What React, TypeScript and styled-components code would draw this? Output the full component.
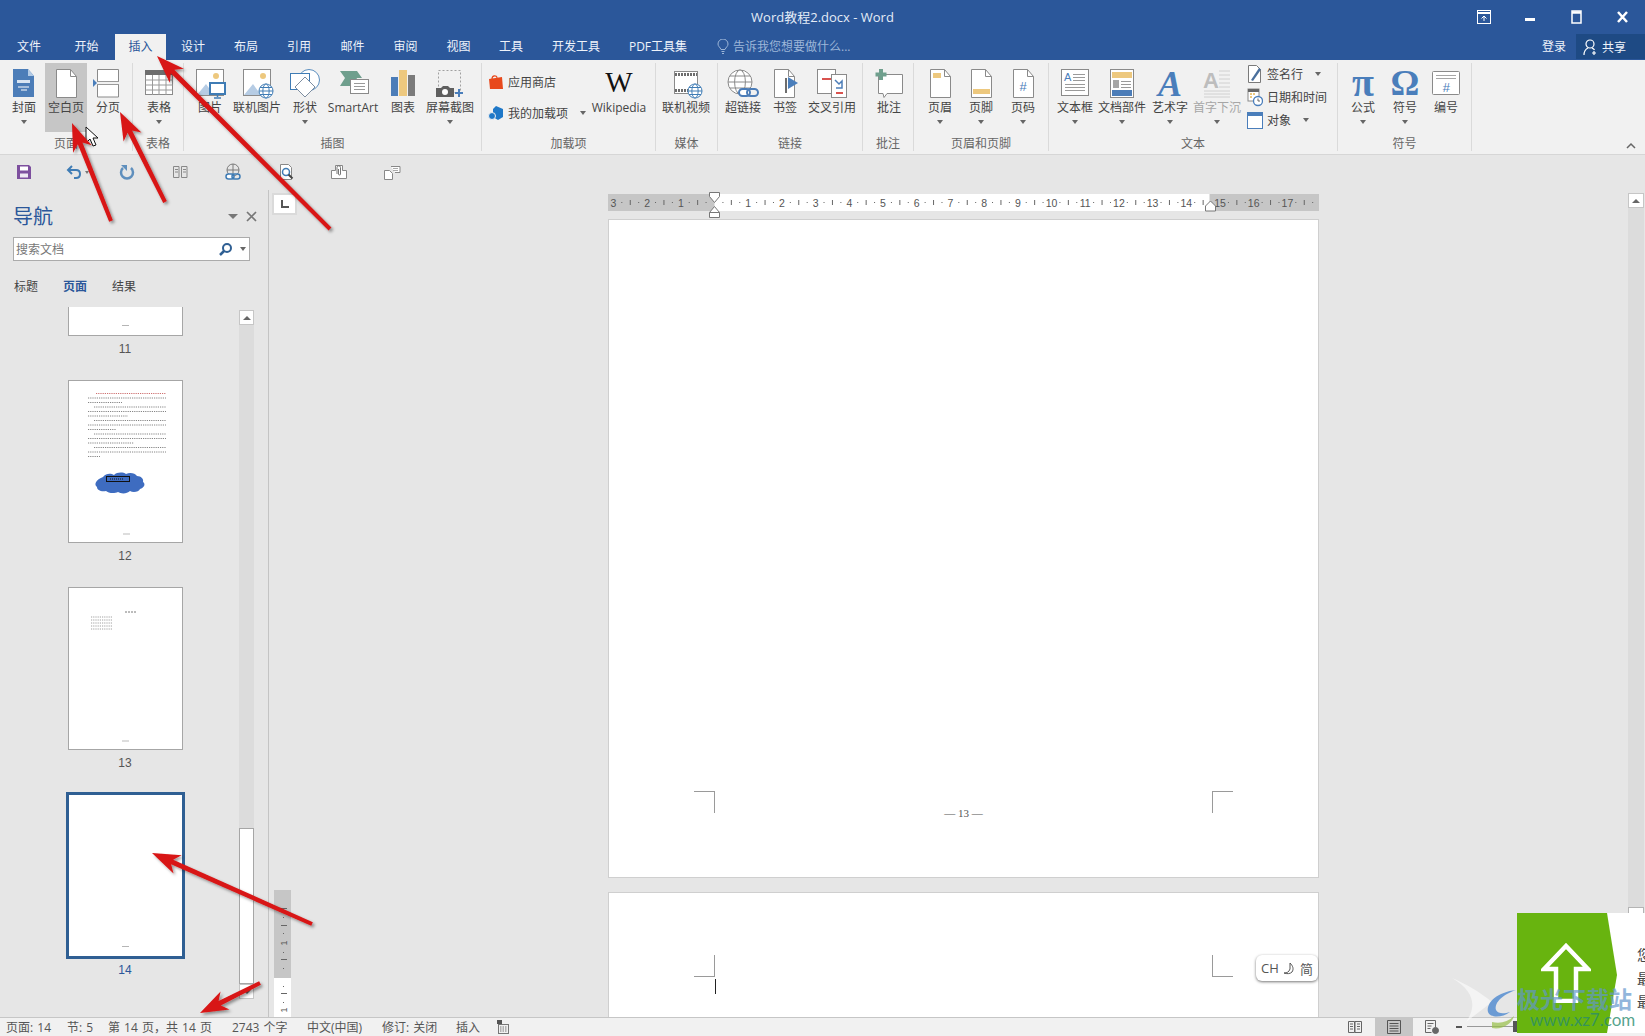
import { type ReactNode } from "react";
import styled, { createGlobalStyle } from "styled-components";

const BLUE = "#2b579a";
const ICON_BLUE = "#4a7ebb";
const GOLD = "#edc87e";
const UI_FONT = `"Open Sans", "Noto Sans CJK SC", sans-serif`;

const GlobalStyle = createGlobalStyle`
  * { box-sizing: border-box; }
  html, body { margin: 0; padding: 0; }
  body { font-family: ${UI_FONT}; font-size: 12px; color: #444; overflow: hidden; }
`;

const Shell = styled.div`
  position: relative;
  width: 1645px;
  height: 1036px;
  overflow: hidden;
  display: flex;
  flex-direction: column;
  background: #e6e6e6;
`;

const TitleBar = styled.header`
  height: 34px;
  background: ${BLUE};
  display: grid;
  grid-template-columns: 1fr auto 1fr;
  align-items: center;
`;

const DocTitle = styled.div`
  grid-column: 2;
  padding-bottom: 2px;
  color: #e4ecf7;
  font-size: 13px;
`;

const WindowButtons = styled.div`
  grid-column: 3;
  justify-self: end;
  display: flex;
`;

const WindowButton = styled.div`
  width: 46px;
  height: 34px;
  display: flex;
  align-items: center;
  justify-content: center;
`;

const TabBar = styled.nav`
  height: 26px;
  background: ${BLUE};
  display: flex;
  align-items: stretch;
`;

const Tab = styled.div<{ $w: number; $active?: boolean }>`
  width: ${(p) => p.$w}px;
  padding-bottom: 2px;
  display: flex;
  align-items: center;
  justify-content: center;
  white-space: nowrap;
  color: ${(p) => (p.$active ? BLUE : "#eef3fa")};
  background: ${(p) => (p.$active ? "#f1f1f1" : "transparent")};
`;

const TellMe = styled.div`
  margin-left: 16px;
  padding-bottom: 2px;
  display: flex;
  align-items: center;
  gap: 4px;
  color: #9db6d8;
`;

const SignIn = styled.div`
  margin-left: auto;
  margin-right: 10px;
  padding-bottom: 2px;
  align-self: center;
  color: #eef3fa;
`;

const ShareButton = styled.div`
  width: 69px;
  height: 25px;
  background: #1e4a84;
  color: #eef3fa;
  display: flex;
  align-items: center;
  gap: 3px;
  padding-left: 7px;
`;

const Ribbon = styled.section`
  position: relative;
  height: 95px;
  padding-top: 3px;
  background: #f1f1f1;
  border-bottom: 1px solid #d6d6d6;
  display: flex;
  align-items: flex-start;
`;

const Group = styled.div<{ $w: number }>`
  width: ${(p) => p.$w}px;
  height: 88px;
  border-right: 1px solid #dadada;
  display: flex;
  flex-direction: column;
`;

const GroupBody = styled.div<{ $pad: number }>`
  height: 69px;
  padding-left: ${(p) => p.$pad}px;
  display: flex;
`;

const GroupLabel = styled.div`
  margin-top: 4px;
  line-height: 16px;
  text-align: center;
  color: #666;
`;

const BigButton = styled.div<{ $w: number; $active?: boolean; $disabled?: boolean }>`
  width: ${(p) => p.$w}px;
  height: 69px;
  padding-top: 3px;
  flex-shrink: 0;
  display: flex;
  flex-direction: column;
  align-items: center;
  white-space: nowrap;
  line-height: 16px;
  color: ${(p) => (p.$disabled ? "#a6a6a6" : "#444")};
  background: ${(p) => (p.$active ? "#c6c6c6" : "transparent")};
`;

const IconSvg = styled.svg`
  overflow: visible;
  flex-shrink: 0;
`;

const Caret = styled.i<{ $inline?: boolean }>`
  display: block;
  width: 0;
  height: 0;
  margin-top: ${(p) => (p.$inline ? 0 : 4)}px;
  margin-left: ${(p) => (p.$inline ? 8 : 0)}px;
  border-left: 3px solid transparent;
  border-right: 3px solid transparent;
  border-top: 4px solid #666;
`;

const SmallColumn = styled.div<{ $w: number; $top: number; $gap: number; $left?: number }>`
  width: ${(p) => p.$w}px;
  padding-top: ${(p) => p.$top}px;
  padding-left: ${(p) => p.$left ?? 0}px;
  display: flex;
  flex-direction: column;
  gap: ${(p) => p.$gap}px;
`;

const SmallRow = styled.div`
  height: 22px;
  display: flex;
  align-items: center;
  gap: 4px;
  white-space: nowrap;
`;

const CollapseMark = styled.svg`
  position: absolute;
  right: 9px;
  bottom: 5px;
`;

const QuickBar = styled.div`
  height: 35px;
  padding: 0 0 2px 12px;
  display: flex;
  align-items: center;
  gap: 35px;
`;

const SaveSlot = styled.div`
  margin: 0 -3px 0 3px;
  display: flex;
`;

const QuickIcon = styled.div`
  position: relative;
  width: 18px;
  height: 18px;
`;

const UndoCaret = styled.i`
  position: absolute;
  left: 20px;
  top: 8px;
  border-left: 2px solid transparent;
  border-right: 2px solid transparent;
  border-top: 3px solid #777;
`;

const Workspace = styled.div`
  flex: 1;
  min-height: 0;
  display: flex;
`;

const NavPane = styled.aside`
  width: 269px;
  flex-shrink: 0;
  border-right: 1px solid #c4c4c4;
  display: flex;
  flex-direction: column;
`;

const NavHeader = styled.div`
  margin-top: 13px;
  height: 28px;
  padding: 0 8px 0 13px;
  display: flex;
  align-items: center;
`;

const NavTitle = styled.h2`
  margin: 0;
  flex: 1;
  font-size: 20px;
  font-weight: 400;
  line-height: 28px;
  color: ${BLUE};
`;

const SearchBox = styled.div`
  margin: 6px 0 0 13px;
  width: 237px;
  height: 24px;
  background: #fff;
  border: 1px solid #ababab;
  padding: 0 3px 0 2px;
  display: flex;
  align-items: center;
  color: #777;
`;

const SearchHint = styled.span`
  flex: 1;
`;

const SearchCaret = styled(Caret)`
  margin-left: 7px;
`;

const NavTabs = styled.div`
  margin: 17px 0 11px 14px;
  height: 18px;
  display: flex;
  gap: 25px;
  line-height: 18px;
`;

const NavTab = styled.span<{ $active?: boolean }>`
  color: ${(p) => (p.$active ? BLUE : "#444")};
  font-weight: ${(p) => (p.$active ? 700 : 400)};
`;

const ThumbArea = styled.div`
  flex: 1;
  min-height: 0;
  display: flex;
`;

const ThumbList = styled.div`
  width: 239px;
  padding-left: 11px;
  overflow: hidden;
  display: flex;
  flex-direction: column;
  align-items: center;
`;

const Thumb = styled.div<{ $h: number; $selected?: boolean }>`
  width: ${(p) => (p.$selected ? 119 : 115)}px;
  height: ${(p) => p.$h}px;
  margin-top: ${(p) => (p.$selected ? -2 : 0)}px;
  flex-shrink: 0;
  background: #fff;
  border: ${(p) => (p.$selected ? `3px solid #2f5f93` : "1px solid #a6a6a6")};
  border-top-width: ${(p) => (p.$h < 40 ? 0 : p.$selected ? 3 : 1)}px;
  display: flex;
  flex-direction: column;
  align-items: center;
  justify-content: flex-end;
`;

const ThumbNumber = styled.div<{ $selected?: boolean }>`
  flex-shrink: 0;
  margin-top: ${(p) => (p.$selected ? 3 : 5)}px;
  margin-bottom: 23px;
  line-height: 16px;
  font-family: "Liberation Sans", sans-serif;
  color: ${(p) => (p.$selected ? BLUE : "#555")};
`;

const ThumbPageMark = styled.div`
  width: 7px;
  height: 1px;
  margin-bottom: 9px;
  background: #b5b5b5;
`;

const NavScroll = styled.div`
  width: 15px;
  height: 689px;
  margin-top: 3px;
  background: #dcdcdc;
  display: flex;
  flex-direction: column;
`;

const ScrollButton = styled.div`
  height: 15px;
  flex-shrink: 0;
  background: #fff;
  border: 1px solid #c6c6c6;
  display: flex;
  align-items: center;
  justify-content: center;
`;

const NavScrollThumb = styled.div`
  height: 156px;
  margin-top: auto;
  background: #fff;
  border: 1px solid #a6a6a6;
`;

const UpMark = styled.i<{ $down?: boolean }>`
  border-left: 4px solid transparent;
  border-right: 4px solid transparent;
  ${(p) => (p.$down ? "border-top" : "border-bottom")}: 4px solid #666;
`;

const MainArea = styled.main`
  flex: 1;
  display: flex;
  min-width: 0;
`;

const Gutter = styled.div`
  width: 339px;
  flex-shrink: 0;
  padding: 3px 0 0 3px;
  display: flex;
  flex-direction: column;
  align-items: flex-start;
`;

const TabStop = styled.div`
  width: 25px;
  height: 22px;
  background: #fff;
  border: 2px solid #dadada;
  display: flex;
  align-items: center;
  justify-content: center;
`;

const VRuler = styled.svg`
  margin: auto 0 0 2px;
  display: block;
`;

const DocColumn = styled.div`
  width: 711px;
  flex-shrink: 0;
  padding-top: 2px;
  overflow: hidden;
  display: flex;
  flex-direction: column;
`;

const HRuler = styled.svg`
  display: block;
  flex-shrink: 0;
`;

const PageSheet = styled.div`
  width: 711px;
  height: 659px;
  flex-shrink: 0;
  background: #fff;
  border: 1px solid #cfcfcf;
  padding: 0 85px 64px 85px;
  display: flex;
  align-items: flex-end;
  justify-content: space-between;
`;

const NextSheet = styled.div`
  position: relative;
  width: 711px;
  flex: 1;
  margin-top: 14px;
  background: #fff;
  border: 1px solid #cfcfcf;
  border-bottom: 0;
  padding: 62px 85px 0 85px;
  display: flex;
  align-items: flex-start;
  justify-content: space-between;
`;

const CropMark = styled.div<{ $side: "left" | "right"; $edge: "top" | "bottom" }>`
  width: 21px;
  height: 22px;
  border-${(p) => p.$edge}: 1px solid #9a9a9a;
  border-${(p) => (p.$side === "left" ? "right" : "left")}: 1px solid #9a9a9a;
`;

const PageNumber = styled.div`
  font-family: "Liberation Serif", serif;
  font-size: 11px;
  line-height: 14px;
  margin-bottom: -7px;
  color: #555;
`;

const TextCursor = styled.div`
  position: absolute;
  left: 106px;
  top: 86px;
  width: 1px;
  height: 15px;
  background: #222;
`;

const ImeBar = styled.div`
  position: absolute;
  right: 0;
  top: 62px;
  width: 62px;
  height: 26px;
  background: #fff;
  border-radius: 6px;
  box-shadow: 0 1px 3px rgba(0, 0, 0, 0.55);
  display: flex;
  align-items: center;
  justify-content: center;
  gap: 4px;
  font-size: 13px;
  color: #555;
`;

const RightGap = styled.div`
  flex: 1;
`;

const DocScroll = styled.div`
  width: 16px;
  margin: 3px 1px 0 0;
  background: #dcdcdc;
  display: flex;
  flex-direction: column;
`;

const DocScrollThumb = styled.div`
  height: 110px;
  margin-top: auto;
  background: #fff;
  border: 1px solid #b4b4b4;
`;

const StatusBar = styled.footer`
  height: 19px;
  background: #f1f1f1;
  border-top: 1px solid #c6c6c6;
  padding: 0 0 1px 6px;
  display: flex;
  align-items: center;
  word-spacing: 1px;
  color: #555;
`;

const StatusItem = styled.span<{ $w: number }>`
  width: ${(p) => p.$w}px;
  white-space: nowrap;
`;

const StatusRight = styled.div`
  margin-left: auto;
  width: 310px;
  height: 18px;
  display: flex;
  align-items: center;
`;

const ViewButton = styled.div<{ $active?: boolean; $w: number }>`
  width: ${(p) => p.$w}px;
  height: 18px;
  display: flex;
  align-items: center;
  justify-content: center;
  background: ${(p) => (p.$active ? "#c6c6c6" : "transparent")};
`;

const ZoomMinus = styled.i`
  width: 6px;
  height: 2px;
  margin-left: 5px;
  background: #555;
`;

const ZoomLine = styled.i`
  width: 46px;
  height: 1px;
  margin-left: 5px;
  background: #999;
`;

const ZoomKnob = styled.i`
  width: 4px;
  height: 11px;
  background: #555;
`;

const ToastCard = styled.div`
  position: absolute;
  right: 0;
  bottom: 3px;
  width: 128px;
  height: 120px;
  background: #fff;
  overflow: hidden;
`;

const ToastGreen = styled.div`
  width: 100px;
  height: 120px;
  background: #68b40f;
  clip-path: polygon(0 0, 90px 0, 100px 62px, 90px 120px, 0 120px);
  display: flex;
  align-items: center;
  justify-content: center;
  padding-right: 2px;
`;

const ToastLines = styled.div`
  position: absolute;
  left: 120px;
  top: 30px;
  width: 60px;
  font-size: 14px;
  line-height: 23.5px;
  color: #444;
`;

const Watermark = styled.div`
  position: absolute;
  left: 1452px;
  top: 978px;
  width: 190px;
  height: 56px;
  pointer-events: none;
`;

const WatermarkName = styled.div`
  position: absolute;
  left: 65px;
  top: 6px;
  font-size: 23px;
  line-height: 30px;
  font-weight: 700;
  white-space: nowrap;
  color: rgba(98, 150, 205, 0.7);
`;

const WatermarkUrl = styled.div`
  position: absolute;
  left: 78px;
  top: 32px;
  font-family: "Lato", sans-serif;
  font-size: 17px;
  line-height: 20px;
  white-space: nowrap;
  color: rgba(40, 140, 110, 0.8);
`;

const ArrowLayer = styled.svg`
  position: absolute;
  left: 0;
  top: 0;
  pointer-events: none;
`;

const PointerLayer = styled.svg`
  position: absolute;
  left: 85px;
  top: 126px;
  pointer-events: none;
`;

function BigIcon({ children }: { children: ReactNode }) {
  return (
    <IconSvg width="36" height="34" viewBox="0 0 36 34" fill="none">
      {children}
    </IconSvg>
  );
}

const Globe = ({ cx, cy, r, color }: { cx: number; cy: number; r: number; color: string }) => (
  <g stroke={color} fill="#fff" strokeWidth="1">
    <circle cx={cx} cy={cy} r={r} />
    <ellipse cx={cx} cy={cy} rx={r * 0.45} ry={r} />
    <path d={`M${cx - r} ${cy}h${r * 2}M${cx - r * 0.85} ${cy - r * 0.5}h${r * 1.7}M${cx - r * 0.85} ${cy + r * 0.5}h${r * 1.7}`} />
  </g>
);

const DocShape = ({ x, w, top = 3, bottom = 31 }: { x: number; w: number; top?: number; bottom?: number }) => (
  <>
    <path
      d={`M${x + 0.5} ${top + 0.5}h${w - 7}l6 7v${bottom - top - 7}h-${w - 1}z`}
      fill="#fff"
      stroke="#8a8a8a"
    />
    <path d={`M${x + w - 6.5} ${top + 0.5}v7h6`} stroke="#8a8a8a" />
  </>
);

const TextLines = ({ x, y, w, n, gap = 3 }: { x: number; y: number; w: number; n: number; gap?: number }) => (
  <path
    d={Array.from({ length: n }, (_, i) => `M${x} ${y + i * gap + 0.5}h${w}`).join("")}
    stroke="#9a9a9a"
  />
);

const ribbonIcons: Record<string, ReactNode> = {
  cover: (
    <>
      <path d="M7 3h15l6 7v21H7z" fill="#4c7db8" />
      <path d="M22 3l6 7h-6z" fill="#b3cbe6" />
      <path d="M11 14h13v3H11z" fill="#d9e5f3" />
      <path d="M12 21h11M15 24h6" stroke="#fff" />
    </>
  ),
  blank: <DocShape x={8} w={21} />,
  pageBreak: (
    <>
      <path d="M7.5 15V3.5h21V15M7.5 19v12h21V19" fill="#fff" stroke="#8a8a8a" />
      <path d="M7 15.5h22M7 18.5h22" stroke="#9a9a9a" />
      <path d="M3 13l4 4-4 4z" fill={ICON_BLUE} />
    </>
  ),
  table: (
    <>
      <rect x="4.5" y="4.5" width="27" height="24" fill="#fff" stroke="#8a8a8a" />
      <rect x="4" y="4" width="28" height="5" fill="#6d6d6d" />
      <path d="M4.5 14h27M4.5 19h27M4.5 24h27M11.5 9v20M18 9v20M25 9v20" stroke="#9a9a9a" />
    </>
  ),
  picture: (
    <>
      <rect x="4.5" y="3.5" width="27" height="26" fill="#fff" stroke="#8a8a8a" />
      <circle cx="24" cy="10" r="3" fill={GOLD} />
      <path d="M5 29l9-11 8 11z" fill="#b6cce4" />
      <rect x="18" y="17" width="15" height="11" fill="#fff" stroke="#3f7cb5" strokeWidth="2" />
      <path d="M25.5 28v3M22 32h7" stroke="#3f7cb5" strokeWidth="1.5" />
    </>
  ),
  onlinePicture: (
    <>
      <rect x="4.5" y="3.5" width="27" height="26" fill="#fff" stroke="#8a8a8a" />
      <circle cx="24" cy="10" r="3" fill={GOLD} />
      <path d="M5 29l9-11 8 11z" fill="#b6cce4" />
      <Globe cx={27} cy={25} r={7} color="#3f7cb5" />
    </>
  ),
  shapes: (
    <>
      <circle cx="22" cy="14" r="10.5" fill="#fff" stroke="#5c8fbf" />
      <rect x="3.5" y="7.5" width="19" height="16" fill="#fff" stroke="#3f7cb5" />
      <path d="M18 11l10 10-10 10-10-10z" fill="#fff" stroke="#7d8da0" />
    </>
  ),
  smartArt: (
    <>
      <path d="M5 5h17l5 7-5 0-3 8-14 0 5-8z" fill="#6f9f8d" />
      <rect x="15.5" y="13.5" width="18" height="14" fill="#fff" stroke="#8a8a8a" />
      <TextLines x={19} y={17} w={11} n={3} />
    </>
  ),
  chart: (
    <>
      <rect x="6" y="11" width="7" height="19" fill="#4c7db8" />
      <rect x="14" y="4" width="8" height="26" fill={GOLD} />
      <rect x="23" y="9" width="7" height="21" fill="#7b7b7b" />
    </>
  ),
  screenshot: (
    <>
      <rect x="6.5" y="4.5" width="22" height="22" stroke="#a0a0a0" strokeDasharray="2 2" />
      <path d="M4 22h5l2-2h5l2 2h4v9H4z" fill="#5f5f5f" />
      <circle cx="13" cy="26" r="3" fill="#fff" />
      <path d="M27 23v8M23 27h8" stroke={ICON_BLUE} strokeWidth="2" />
    </>
  ),
  wikipedia: (
    <text x="18" y="26" textAnchor="middle" fontFamily="Liberation Serif" fontSize="29" fill="#111">
      W
    </text>
  ),
  onlineVideo: (
    <>
      <rect x="6.5" y="5.5" width="23" height="22" fill="#fff" stroke="#8a8a8a" />
      <path d="M7 8.5h22M7 24.5h22" stroke="#6d6d6d" strokeWidth="3" strokeDasharray="2 1" />
      <Globe cx={27} cy={25} r={7} color="#3f7cb5" />
    </>
  ),
  hyperlink: (
    <>
      <Globe cx={15} cy={16} r={12} color="#8a8a8a" />
      <rect x="14" y="23" width="11" height="7" rx="3.5" fill="#fff" stroke="#4c7db8" strokeWidth="2" />
      <rect x="22" y="23" width="11" height="7" rx="3.5" stroke="#4c7db8" strokeWidth="2" />
    </>
  ),
  bookmark: (
    <>
      <DocShape x={7} w={21} />
      <path d="M19 12v15" stroke="#6d6d6d" strokeWidth="2" />
      <path d="M21 11l10 6-10 6z" fill={ICON_BLUE} />
    </>
  ),
  crossRef: (
    <>
      <rect x="3.5" y="3.5" width="18" height="24" fill="#fff" stroke="#8a8a8a" />
      <rect x="17.5" y="8.5" width="15" height="23" fill="#fff" stroke="#8a8a8a" />
      <path d="M8 13h9M22 27h7" stroke="#d9534f" strokeWidth="2" />
      <path d="M21 14l4 4 3-3v7h-6" stroke="#4c7db8" strokeWidth="1.5" />
    </>
  ),
  comment: (
    <>
      <path d="M7.5 8.5h24v19H16l-3 4-1-4H7.5z" fill="#fff" stroke="#8a8a8a" />
      <path d="M10 3v11M4.5 8.5h11" stroke="#6f9f8d" strokeWidth="4" />
    </>
  ),
  header: (
    <>
      <DocShape x={8} w={21} />
      <rect x="11" y="7" width="8" height="5" fill={GOLD} />
    </>
  ),
  footer: (
    <>
      <DocShape x={8} w={21} />
      <rect x="10" y="23" width="17" height="5" fill={GOLD} />
    </>
  ),
  pageNumber: (
    <>
      <DocShape x={8} w={21} />
      <text x="18" y="25" textAnchor="middle" fontFamily="Liberation Sans" fontSize="13" fill={ICON_BLUE}>
        #
      </text>
    </>
  ),
  textBox: (
    <>
      <rect x="4.5" y="3.5" width="27" height="26" fill="#fff" stroke="#8a8a8a" />
      <text x="7" y="15" fontFamily="Liberation Sans" fontSize="11" fill={ICON_BLUE}>
        A
      </text>
      <TextLines x={16} y={8} w={12} n={3} />
      <TextLines x={8} y={18} w={20} n={3} />
    </>
  ),
  docParts: (
    <>
      <rect x="6.5" y="3.5" width="23" height="28" fill="#fff" stroke="#8a8a8a" />
      <rect x="8" y="6" width="20" height="6" fill={GOLD} />
      <rect x="9" y="14" width="6" height="8" fill="#a6a6a6" />
      <TextLines x={17} y={15} w={10} n={3} />
      <rect x="8" y="24" width="20" height="6" fill="#4c7db8" />
    </>
  ),
  wordArt: (
    <text x="18" y="30" textAnchor="middle" fontFamily="Liberation Serif" fontStyle="italic" fontWeight="700" fontSize="36" fill={ICON_BLUE}>
      A
    </text>
  ),
  dropCap: (
    <>
      <text x="4" y="22" fontFamily="Liberation Sans" fontWeight="700" fontSize="22" fill="#bdbdbd">
        A
      </text>
      <path d="M20 5h11M20 9h11M20 13h11M20 17h11M20 21h11M5 25h26M5 28h26M5 31h26" stroke="#d0d0d0" />
    </>
  ),
  pi: (
    <text x="18" y="30" textAnchor="middle" fontFamily="Liberation Serif" fontWeight="700" fontSize="40" fill={ICON_BLUE}>
      π
    </text>
  ),
  omega: (
    <text x="18" y="29" textAnchor="middle" fontFamily="Liberation Serif" fontWeight="700" fontSize="36" fill={ICON_BLUE}>
      Ω
    </text>
  ),
  numbering: (
    <>
      <rect x="4.5" y="5.5" width="27" height="23" rx="1" fill="#fff" stroke="#8a8a8a" />
      <path d="M8 9.5h20M8 12.5h20" stroke="#a6a6a6" />
      <text x="18" y="26" textAnchor="middle" fontFamily="Liberation Sans" fontStyle="italic" fontSize="13" fill={ICON_BLUE}>
        #
      </text>
    </>
  ),
};

type BigItem = { label: string; icon: string; w: number; caret?: boolean; active?: boolean; disabled?: boolean };

const groups: { title: string; w: number; pad: number; items: BigItem[] }[] = [
  {
    title: "页面",
    w: 133,
    pad: 3,
    items: [
      { label: "封面", icon: "cover", w: 42, caret: true },
      { label: "空白页", icon: "blank", w: 42, active: true },
      { label: "分页", icon: "pageBreak", w: 42 },
    ],
  },
  { title: "表格", w: 51, pad: 5, items: [{ label: "表格", icon: "table", w: 42, caret: true }] },
  {
    title: "插图",
    w: 298,
    pad: 7,
    items: [
      { label: "图片", icon: "picture", w: 38 },
      { label: "联机图片", icon: "onlinePicture", w: 56 },
      { label: "形状", icon: "shapes", w: 40, caret: true },
      { label: "SmartArt", icon: "smartArt", w: 56 },
      { label: "图表", icon: "chart", w: 44 },
      { label: "屏幕截图", icon: "screenshot", w: 50, caret: true },
    ],
  },
];

const laterGroups: { title: string; w: number; pad: number; items: BigItem[] }[] = [
  { title: "媒体", w: 62, pad: 5, items: [{ label: "联机视频", icon: "onlineVideo", w: 50 }] },
  {
    title: "链接",
    w: 145,
    pad: 3,
    items: [
      { label: "超链接", icon: "hyperlink", w: 44 },
      { label: "书签", icon: "bookmark", w: 40 },
      { label: "交叉引用", icon: "crossRef", w: 54 },
    ],
  },
  { title: "批注", w: 51, pad: 6, items: [{ label: "批注", icon: "comment", w: 40 }] },
  {
    title: "页眉和页脚",
    w: 135,
    pad: 5,
    items: [
      { label: "页眉", icon: "header", w: 42, caret: true },
      { label: "页脚", icon: "footer", w: 40, caret: true },
      { label: "页码", icon: "pageNumber", w: 44, caret: true },
    ],
  },
];

const textItems: BigItem[] = [
  { label: "文本框", icon: "textBox", w: 42, caret: true },
  { label: "文档部件", icon: "docParts", w: 52, caret: true },
  { label: "艺术字", icon: "wordArt", w: 44, caret: true },
  { label: "首字下沉", icon: "dropCap", w: 50, caret: true, disabled: true },
];

const symbolItems: BigItem[] = [
  { label: "公式", icon: "pi", w: 42, caret: true },
  { label: "符号", icon: "omega", w: 42, caret: true },
  { label: "编号", icon: "numbering", w: 40 },
];

function RibbonButton({ item }: { item: BigItem }) {
  return (
    <BigButton $w={item.w} $active={item.active} $disabled={item.disabled}>
      <BigIcon>{ribbonIcons[item.icon]}</BigIcon>
      {item.label}
      {item.caret && <Caret />}
    </BigButton>
  );
}

const StoreIcon = () => (
  <svg width="16" height="16" viewBox="0 0 16 16">
    <path d="M1 5l13-2 1 12H2z" fill="#e8491c" />
    <path d="M4 5c0-4 5-4 5-1" fill="none" stroke="#e8491c" strokeWidth="1.2" />
  </svg>
);

const AddinIcon = () => (
  <svg width="16" height="16" viewBox="0 0 16 16">
    <path d="M8 1l7 3v8l-5 3-5-3V4z" fill="#1f78c8" />
    <circle cx="4" cy="11" r="3.5" fill="#1f78c8" stroke="#f1f1f1" />
  </svg>
);

const SignLineIcon = () => (
  <svg width="16" height="20" viewBox="0 0 16 20" fill="none">
    <path d="M1.5 1.5h8l4 4v13h-12z" fill="#fff" stroke="#7a7a7a" />
    <path d="M4 16L12 4l2 1.5L6 17z" fill="#4a6f9c" />
  </svg>
);

const DateIcon = () => (
  <svg width="16" height="20" viewBox="0 0 16 20" fill="none">
    <rect x="1" y="2" width="11" height="12" fill="#fff" stroke="#8a8a8a" />
    <rect x="1" y="2" width="11" height="3" fill="#666" />
    <path d="M3 7h2M6 7h2M3 10h2" stroke={GOLD} strokeWidth="2" />
    <circle cx="11" cy="14" r="4.5" fill="#fff" stroke={ICON_BLUE} strokeWidth="1.3" />
    <path d="M11 11.5V14h2" stroke="#666" />
  </svg>
);

const ObjectIcon = () => (
  <svg width="16" height="20" viewBox="0 0 16 20" fill="none">
    <rect x="0.5" y="2.5" width="15" height="16" fill="#fff" stroke={ICON_BLUE} />
    <rect x="0" y="2" width="16" height="4" fill={ICON_BLUE} />
  </svg>
);

const quickIcons: ReactNode[] = [
  <>
    <path d="M2 2h12l2 2v12H2z" fill="#7d4f9e" />
    <rect x="5" y="3.5" width="8" height="4" fill="#fff" />
    <rect x="5" y="10.5" width="8" height="4" fill="#efe8f3" />
  </>,
  <path d="M7 3L3 7l4 4M3 7h8c3 0 4 2 4 4s-1 4-4 4H9" fill="none" stroke="#3f7cb5" strokeWidth="2" />,
  <>
    <path d="M5 5a6 6 0 1 0 8 0" fill="none" stroke="#5f8fbd" strokeWidth="2.5" />
    <path d="M3 2h6v6z" fill="#5f8fbd" />
  </>,
  <path d="M2.5 3.5h5.5v11H2.5zM10.5 3.5H16v11h-5.5zM4 6.5h3M4 9h3M12 6.5h3M12 9h3" fill="none" stroke="#888" />,
  <>
    <circle cx="9" cy="7" r="6" fill="none" stroke="#7a7a7a" />
    <path d="M3 7h12M9 1v12" stroke="#7a7a7a" />
    <rect x="2" y="11" width="8" height="5" rx="2.5" fill="#fff" stroke="#3f7cb5" strokeWidth="1.5" />
    <rect x="8" y="11" width="8" height="5" rx="2.5" fill="none" stroke="#3f7cb5" strokeWidth="1.5" />
  </>,
  <>
    <path d="M3.5 1.5h8l3 3v12h-11z" fill="#fff" stroke="#888" />
    <circle cx="9" cy="9" r="3.5" fill="#fff" stroke="#3f7cb5" strokeWidth="1.5" />
    <path d="M11.5 11.5l4 4" stroke="#444" strokeWidth="2" />
  </>,
  <>
    <path d="M1.5 7.5h4v-5h7v5h4v8h-15z" fill="#fff" stroke="#888" />
    <path d="M7 11V4.5a1.7 1.7 0 0 1 3.5 0V11a1 1 0 0 1-2 0V6" fill="none" stroke="#777" />
  </>,
  <>
    <path d="M1.5 7.5h5l3 3v6h-8z" fill="#fff" stroke="#888" />
    <path d="M8 3.5h9v6h-5" fill="#fff" stroke="#888" />
    <path d="M10 5.5h5M10 7.5h5" stroke="#aaa" />
  </>,
];

const sixteen = (node: ReactNode) => (
  <svg width="18" height="18" viewBox="0 0 18 18">
    {node}
  </svg>
);

function Ruler() {
  const zero = 106.5;
  const cm = 33.7;
  const marks = Array.from({ length: 21 }, (_, i) => i - 3);
  return (
    <HRuler width="711" height="27" viewBox="0 0 711 27">
      <rect x="0" y="2" width="711" height="17" fill="#c6c6c6" />
      <rect x={zero} y="2" width="495" height="17" fill="#fff" />
      {marks.map((n) => {
        const x = zero + n * cm;
        return (
          <g key={n}>
            {n !== 0 && (
              <text x={x} y="14.5" textAnchor="middle" fontFamily="Liberation Sans" fontSize="10.5" fill="#555">
                {Math.abs(n)}
              </text>
            )}
            <path d={`M${x + cm / 2} 8v5`} stroke="#666" />
            <path d={`M${x + cm / 4} 10v1M${x + (cm * 3) / 4} 10v1`} stroke="#666" />
          </g>
        );
      })}
      <path d="M101.5 0.5h10v4l-5 6-5-6zM101.5 20.5l5-6 5 6v5h-10zM101.5 20.5h10" fill="#fff" stroke="#777" />
      <path d="M597.5 14l5-5 5 5v5h-10z" fill="#fff" stroke="#777" />
    </HRuler>
  );
}

const vRulerMarks: { y: number; kind: "dot" | "dash" | "num" }[] = [
  { y: 18, kind: "dash" },
  { y: 27, kind: "dot" },
  { y: 35, kind: "dash" },
  { y: 43, kind: "dot" },
  { y: 53, kind: "num" },
  { y: 62, kind: "dot" },
  { y: 69, kind: "dash" },
  { y: 78, kind: "dot" },
  { y: 96, kind: "dot" },
  { y: 103, kind: "dash" },
  { y: 112, kind: "dot" },
  { y: 120, kind: "num" },
];

function VerticalRuler() {
  return (
    <VRuler width="17" height="127" viewBox="0 0 17 127">
      <rect width="17" height="88" fill="#c6c6c6" />
      <rect y="88" width="17" height="39" fill="#fff" />
      {vRulerMarks.map(({ y, kind }) =>
        kind === "num" ? (
          <text
            key={y}
            x="10"
            y={y}
            transform={`rotate(-90 10 ${y})`}
            textAnchor="middle"
            dominantBaseline="central"
            fontFamily="Liberation Sans"
            fontSize="9"
            fill="#555"
          >
            1
          </text>
        ) : (
          <path key={y} d={`M${kind === "dash" ? 7 : 9} ${y + 0.5}h${kind === "dash" ? 6 : 1}`} stroke="#666" />
        ),
      )}
    </VRuler>
  );
}

function ThumbText() {
  const rows = [
    [14, 70, "#c86060"], [6, 78, "#777"], [6, 34, "#777"],
    [12, 72, "#777"], [6, 78, "#777"], [6, 40, "#777"],
    [12, 72, "#777"], [6, 78, "#777"], [6, 28, "#777"],
    [12, 72, "#777"], [6, 78, "#777"], [6, 46, "#777"],
    [12, 72, "#777"], [6, 78, "#777"], [6, 12, "#777"],
  ] as const;
  return (
    <svg width="113" height="160" viewBox="0 0 113 160">
      {rows.map(([x, w, c], i) => (
        <path
          key={i}
          d={`M${x + 13} ${11.5 + i * 4.5}h${w}`}
          stroke={c}
          strokeWidth="0.9"
          strokeDasharray="1.2 1"
        />
      ))}
      <g transform="translate(0 -3)">
        <path
          d="M34 98c3-4 8-4 11-2 3-3 9-3 12-1 4-2 9-1 11 2 4 0 7 3 6 6 3 2 1 6-3 7-1 3-7 4-10 2-3 3-9 3-12 1-4 2-10 1-12-1-5 1-9-1-9-4-3-2-2-7 6-10z"
          fill="#3e6cc0"
        />
        <rect x="37.5" y="97.5" width="23" height="5" fill="none" stroke="#111" />
        <path d="M41 100h14" stroke="#112" strokeDasharray="1 1" />
      </g>
      <path d="M54 152h7" stroke="#bbb" />
    </svg>
  );
}

function ThumbToc() {
  return (
    <svg width="113" height="160" viewBox="0 0 113 160">
      <path d="M56 23h11" stroke="#555" strokeWidth="0.8" strokeDasharray="2 1" />
      {[28, 31, 34, 37, 40].map((y) => (
        <path key={y} d={`M22 ${y}h21`} stroke="#888" strokeWidth="0.8" strokeDasharray="1.2 1" />
      ))}
      <path d="M53 152h7" stroke="#bbb" />
    </svg>
  );
}

type ArrowLine = { tip: [number, number]; tail: [number, number] };

const arrows: ArrowLine[] = [
  { tip: [157, 56], tail: [330, 229] },
  { tip: [72, 123], tail: [111, 221] },
  { tip: [120, 112], tail: [165, 202] },
  { tip: [152, 853], tail: [312, 924] },
  { tip: [200, 1013], tail: [260, 983] },
];

function arrowPoints({ tip, tail }: ArrowLine) {
  const len = Math.hypot(tail[0] - tip[0], tail[1] - tip[1]);
  const ux = (tail[0] - tip[0]) / len;
  const uy = (tail[1] - tip[1]) / len;
  const at = (along: number, side: number) =>
    `${tip[0] + ux * along - uy * side},${tip[1] + uy * along + ux * side}`;
  return [
    at(0, 0),
    at(28, 10),
    at(22, 2.5),
    at(len, 2),
    at(len, -2),
    at(22, -2.5),
    at(28, -10),
  ].join(" ");
}

export default function App() {
  return (
    <Shell>
      <GlobalStyle />
      <TitleBar>
        <DocTitle>Word教程2.docx - Word</DocTitle>
        <WindowButtons>
          <WindowButton>
            <svg width="14" height="14" viewBox="0 0 14 14" fill="none" stroke="#fff">
              <rect x="0.5" y="0.5" width="13" height="13" />
              <path d="M1 3h12" strokeWidth="2" />
              <path d="M7 11V6M4.5 8.5L7 6l2.5 2.5" />
            </svg>
          </WindowButton>
          <WindowButton>
            <svg width="10" height="10" viewBox="0 0 10 10">
              <rect y="6" width="10" height="3" fill="#fff" />
            </svg>
          </WindowButton>
          <WindowButton>
            <svg width="11" height="14" viewBox="0 0 11 14" fill="none" stroke="#fff">
              <rect x="1" y="1" width="9" height="12" strokeWidth="1.5" />
              <path d="M1 2.5h9" strokeWidth="2.5" />
            </svg>
          </WindowButton>
          <WindowButton>
            <svg width="11" height="12" viewBox="0 0 11 12" stroke="#fff" strokeWidth="2.5">
              <path d="M1 1l9 10M10 1L1 11" />
            </svg>
          </WindowButton>
        </WindowButtons>
      </TitleBar>

      <TabBar>
        <Tab $w={58}>文件</Tab>
        <Tab $w={57}>开始</Tab>
        <Tab $w={51} $active>
          插入
        </Tab>
        <Tab $w={54}>设计</Tab>
        <Tab $w={52}>布局</Tab>
        <Tab $w={54}>引用</Tab>
        <Tab $w={53}>邮件</Tab>
        <Tab $w={53}>审阅</Tab>
        <Tab $w={53}>视图</Tab>
        <Tab $w={52}>工具</Tab>
        <Tab $w={78}>开发工具</Tab>
        <Tab $w={86}>PDF工具集</Tab>
        <TellMe>
          <svg width="12" height="15" viewBox="0 0 12 15" fill="none" stroke="#9db6d8">
            <path d="M4 10.5C3 8 1 7.5 1 5a5 5 0 0 1 10 0c0 2.5-2 3-3 5.5z" />
            <path d="M4.5 12.5h3M5 14.5h2" />
          </svg>
          告诉我您想要做什么...
        </TellMe>
        <SignIn>登录</SignIn>
        <ShareButton>
          <svg width="16" height="18" viewBox="0 0 16 18" fill="none" stroke="#fff" strokeWidth="1.2">
            <circle cx="7" cy="6" r="4" />
            <path d="M1 17c0-4 2-6 4-7M9 10c1 .5 2 1 2.5 2M11 13v4M9 15h4" />
          </svg>
          共享
        </ShareButton>
      </TabBar>

      <Ribbon>
        {groups.map((g) => (
          <Group key={g.title} $w={g.w}>
            <GroupBody $pad={g.pad}>
              {g.items.map((item) => (
                <RibbonButton key={item.label} item={item} />
              ))}
            </GroupBody>
            <GroupLabel>{g.title}</GroupLabel>
          </Group>
        ))}
        <Group $w={174}>
          <GroupBody $pad={6}>
            <SmallColumn $w={99} $top={8} $gap={9}>
              <SmallRow>
                <StoreIcon />
                应用商店
              </SmallRow>
              <SmallRow>
                <AddinIcon />
                我的加载项
                <Caret $inline />
              </SmallRow>
            </SmallColumn>
            <BigButton $w={64}>
              <BigIcon>{ribbonIcons.wikipedia}</BigIcon>
              Wikipedia
            </BigButton>
          </GroupBody>
          <GroupLabel>加载项</GroupLabel>
        </Group>
        {laterGroups.map((g) => (
          <Group key={g.title} $w={g.w}>
            <GroupBody $pad={g.pad}>
              {g.items.map((item) => (
                <RibbonButton key={item.label} item={item} />
              ))}
            </GroupBody>
            <GroupLabel>{g.title}</GroupLabel>
          </Group>
        ))}
        <Group $w={289}>
          <GroupBody $pad={5}>
            {textItems.map((item) => (
              <RibbonButton key={item.label} item={item} />
            ))}
            <SmallColumn $w={92} $top={0} $gap={1} $left={5}>
              <SmallRow>
                <SignLineIcon />
                签名行
                <Caret $inline />
              </SmallRow>
              <SmallRow>
                <DateIcon />
                日期和时间
              </SmallRow>
              <SmallRow>
                <ObjectIcon />
                对象
                <Caret $inline />
              </SmallRow>
            </SmallColumn>
          </GroupBody>
          <GroupLabel>文本</GroupLabel>
        </Group>
        <Group $w={134}>
          <GroupBody $pad={4}>
            {symbolItems.map((item) => (
              <RibbonButton key={item.label} item={item} />
            ))}
          </GroupBody>
          <GroupLabel>符号</GroupLabel>
        </Group>
        <CollapseMark width="10" height="7" viewBox="0 0 10 7" fill="none" stroke="#666" strokeWidth="1.5">
          <path d="M1 6l4-4 4 4" />
        </CollapseMark>
      </Ribbon>

      <QuickBar>
        {quickIcons.map((icon, i) =>
          i === 0 ? (
            <SaveSlot key={i}>{sixteen(icon)}</SaveSlot>
          ) : (
            <QuickIcon key={i}>
              {sixteen(icon)}
              {i === 1 && <UndoCaret />}
            </QuickIcon>
          ),
        )}
      </QuickBar>

      <Workspace>
        <NavPane>
          <NavHeader>
            <NavTitle>导航</NavTitle>
            <svg width="32" height="12" viewBox="0 0 32 12">
              <path d="M0 3h10L5 8z" fill="#777" />
              <path d="M19 1l9 9M28 1l-9 9" stroke="#777" strokeWidth="1.7" />
            </svg>
          </NavHeader>
          <SearchBox>
            <SearchHint>搜索文档</SearchHint>
            <svg width="15" height="15" viewBox="0 0 15 15" fill="none" stroke="#2f5f93" strokeWidth="2">
              <circle cx="9" cy="6" r="4" />
              <path d="M6 9l-4 4" strokeWidth="2.5" />
            </svg>
            <SearchCaret $inline />
          </SearchBox>
          <NavTabs>
            <NavTab>标题</NavTab>
            <NavTab $active>页面</NavTab>
            <NavTab>结果</NavTab>
          </NavTabs>
          <ThumbArea>
            <ThumbList>
              <Thumb $h={29}>
                <ThumbPageMark />
              </Thumb>
              <ThumbNumber>11</ThumbNumber>
              <Thumb $h={163}>
                <ThumbText />
              </Thumb>
              <ThumbNumber>12</ThumbNumber>
              <Thumb $h={163}>
                <ThumbToc />
              </Thumb>
              <ThumbNumber>13</ThumbNumber>
              <Thumb $h={167} $selected>
                <ThumbPageMark />
              </Thumb>
              <ThumbNumber $selected>14</ThumbNumber>
            </ThumbList>
            <NavScroll>
              <ScrollButton>
                <UpMark />
              </ScrollButton>
              <NavScrollThumb />
              <ScrollButton>
                <UpMark $down />
              </ScrollButton>
            </NavScroll>
          </ThumbArea>
        </NavPane>

        <MainArea>
          <Gutter>
            <TabStop>
              <svg width="9" height="9" viewBox="0 0 9 9" fill="none" stroke="#555" strokeWidth="2">
                <path d="M2 0v7h7" />
              </svg>
            </TabStop>
            <VerticalRuler />
          </Gutter>
          <DocColumn>
            <Ruler />
            <PageSheet>
              <CropMark $side="left" $edge="top" />
              <PageNumber>— 13 —</PageNumber>
              <CropMark $side="right" $edge="top" />
            </PageSheet>
            <NextSheet>
              <CropMark $side="left" $edge="bottom" />
              <CropMark $side="right" $edge="bottom" />
              <TextCursor />
              <ImeBar>
                CH
                <svg width="13" height="13" viewBox="0 0 13 13" fill="none" stroke="#555">
                  <path d="M7 1c3 3 4 6 2 9-2 2-5 2-8 1 3 0 5-1 6-4 0-2 0-4 0-6z" />
                </svg>
                简
              </ImeBar>
            </NextSheet>
          </DocColumn>
          <RightGap />
          <DocScroll>
            <ScrollButton>
              <UpMark />
            </ScrollButton>
            <DocScrollThumb />
          </DocScroll>
        </MainArea>
      </Workspace>

      <StatusBar>
        <StatusItem $w={61}>页面: 14</StatusItem>
        <StatusItem $w={41}>节: 5</StatusItem>
        <StatusItem $w={124}>第 14 页，共 14 页</StatusItem>
        <StatusItem $w={75}>2743 个字</StatusItem>
        <StatusItem $w={75}>中文(中国)</StatusItem>
        <StatusItem $w={74}>修订: 关闭</StatusItem>
        <StatusItem $w={41}>插入</StatusItem>
        <svg width="13" height="14" viewBox="0 0 13 14" fill="none">
          <rect x="1.5" y="4.5" width="10" height="9" stroke="#777" />
          <path d="M3 7h7M3 9h7M3 11h7" stroke="#777" strokeDasharray="1.5 1" />
          <rect x="0" y="0" width="5" height="4" fill="#555" />
        </svg>
        <StatusRight>
          <ViewButton $w={40}>
            <svg width="14" height="14" viewBox="0 0 14 14" fill="none" stroke="#666">
              <path d="M0.5 1.5h6v11h-6zM7 1.5h6.5v11H7zM2 4h3M2 6.5h3M2 9h3M9 4h3M9 6.5h3M9 9h3" />
            </svg>
          </ViewButton>
          <ViewButton $w={38} $active>
            <svg width="14" height="14" viewBox="0 0 14 14" fill="none" stroke="#555">
              <path d="M0.5 0.5h13v13h-13zM2.5 3.5h9M2.5 6h9M2.5 8.5h9M2.5 11h9" />
            </svg>
          </ViewButton>
          <ViewButton $w={38}>
            <svg width="14" height="14" viewBox="0 0 14 14" fill="none" stroke="#666">
              <path d="M0.5 0.5h10v7M0.5 0.5v12h6M2.5 3.5h6M2.5 6h4M2.5 8.5h3" />
              <circle cx="10.5" cy="10.5" r="3" fill="#666" />
            </svg>
          </ViewButton>
          <ZoomMinus />
          <ZoomLine />
          <ZoomKnob />
        </StatusRight>
      </StatusBar>

      <ToastCard>
        <ToastGreen>
          <svg width="50" height="60" viewBox="0 0 50 60" fill="none" stroke="#fff" strokeWidth="4.5">
            <path d="M25 3L3 26h12v32h20V26h12z" />
          </svg>
        </ToastGreen>
        <ToastLines>
          您<br />
          最<br />
          最
        </ToastLines>
      </ToastCard>

      <Watermark>
        <svg width="70" height="56" viewBox="0 0 70 56" fill="none">
          <path d="M0 0c14 6 28 14 40 24L14 44C24 30 24 14 0 0z" fill="rgba(255,255,255,.55)" />
          <path d="M64 12C46 14 34 24 36 34c2 6 14 6 22 0-6 2-12 2-14-2-2-8 8-16 20-20z" fill="rgba(65,130,205,.75)" />
          <path d="M40 44c8 2 16 0 22-6-2 8-12 14-22 12z" fill="rgba(150,190,70,.7)" />
        </svg>
        <WatermarkName>极光下载站</WatermarkName>
        <WatermarkUrl>www.xz7.com</WatermarkUrl>
      </Watermark>

      <PointerLayer width="14" height="22" viewBox="0 0 14 22">
        <path d="M1 1v16l4-4 3 7 3-1-3-7h5z" fill="#fff" stroke="#111" />
      </PointerLayer>

      <ArrowLayer width="1645" height="1036" viewBox="0 0 1645 1036">
        <defs>
          <filter id="arrowShadow" x="-20%" y="-20%" width="140%" height="140%">
            <feDropShadow dx="2" dy="2" stdDeviation="1.5" floodColor="#000" floodOpacity="0.4" />
          </filter>
        </defs>
        {arrows.map((a) => (
          <polygon key={a.tip[0]} points={arrowPoints(a)} fill="#d81414" filter="url(#arrowShadow)" />
        ))}
      </ArrowLayer>
    </Shell>
  );
}
